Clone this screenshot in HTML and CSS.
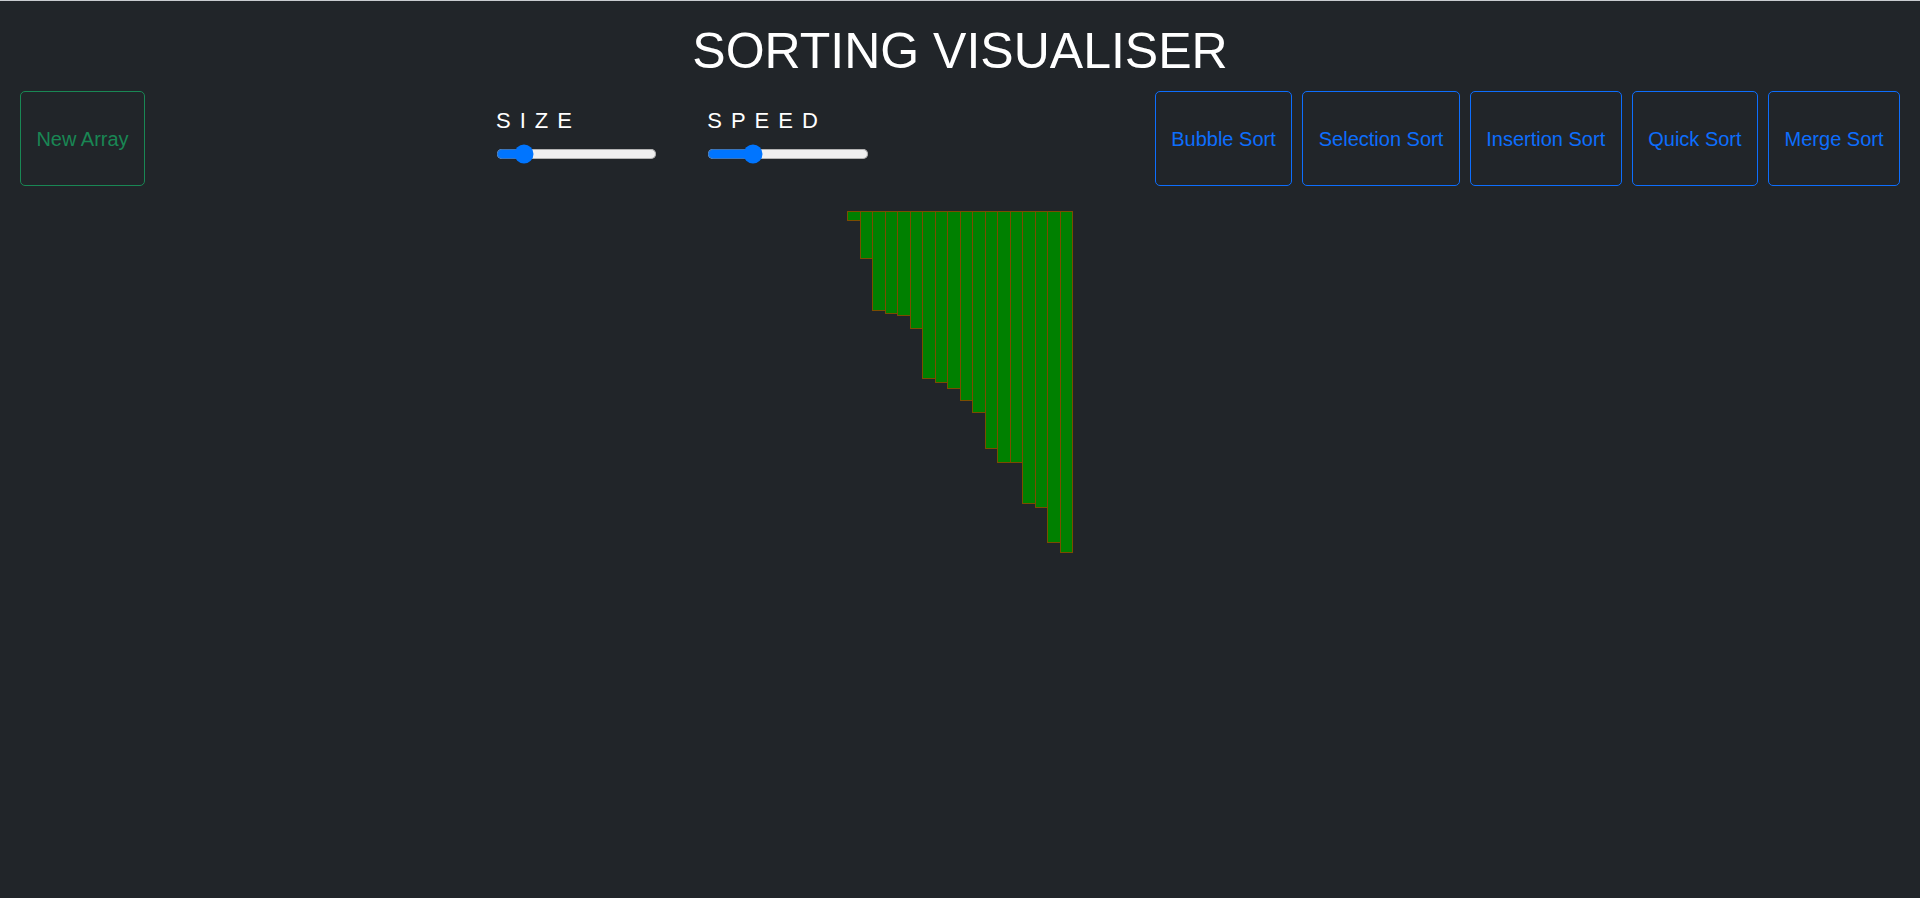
FILE: index.html
```html
<!DOCTYPE html>
<html lang="en">
<head>
<meta charset="utf-8">
<title>Sorting Visualiser</title>
<link rel="stylesheet" href="styles.css">
</head>
<body>
<h1 class="title">SORTING VISUALISER</h1>
<div class="controls">
  <button class="btn btn-green new-array">New Array</button>
  <div class="sliders">
    <div class="slider-group">
      <div class="slider-label">SIZE</div>
      <div class="slider-wrap"><input class="slider" type="range" min="0" max="100" value="13"></div>
    </div>
    <div class="slider-group">
      <div class="slider-label">SPEED</div>
      <div class="slider-wrap"><input class="slider" type="range" min="0" max="100" value="25"></div>
    </div>
  </div>
  <div class="sort-buttons">
    <button class="btn btn-blue">Bubble Sort</button>
    <button class="btn btn-blue">Selection Sort</button>
    <button class="btn btn-blue">Insertion Sort</button>
    <button class="btn btn-blue">Quick Sort</button>
    <button class="btn btn-blue">Merge Sort</button>
  </div>
</div>
<div class="bars">
  <div class="bar" style="height:10px"></div>
  <div class="bar" style="height:48px"></div>
  <div class="bar" style="height:100px"></div>
  <div class="bar" style="height:103px"></div>
  <div class="bar" style="height:105px"></div>
  <div class="bar" style="height:118px"></div>
  <div class="bar" style="height:168px"></div>
  <div class="bar" style="height:172px"></div>
  <div class="bar" style="height:178px"></div>
  <div class="bar" style="height:190px"></div>
  <div class="bar" style="height:202px"></div>
  <div class="bar" style="height:238px"></div>
  <div class="bar" style="height:252px"></div>
  <div class="bar" style="height:252px"></div>
  <div class="bar" style="height:293px"></div>
  <div class="bar" style="height:297px"></div>
  <div class="bar" style="height:332px"></div>
  <div class="bar" style="height:342px"></div>
</div>
</body>
</html>
```

FILE: styles.css
```css
html, body {
  margin: 0;
  padding: 0;
}

body {
  background: #212529;
  min-height: 100vh;
  box-sizing: border-box;
  border-top: 1px solid #c9ccd0;
  font-family: "Liberation Sans", Arial, sans-serif;
  color: #fff;
}

.title {
  margin: 0;
  padding-top: 20px;
  font-size: 50px;
  line-height: 60px;
  font-weight: 400;
  text-align: center;
  color: #fff;
}

.controls {
  display: flex;
  align-items: flex-start;
  padding: 0 20px;
  margin-top: 10px;
}

.btn {
  box-sizing: border-box;
  height: 95px;
  padding: 0 15.5px;
  margin: 0;
  background: transparent;
  border: 1px solid;
  border-radius: 5px;
  font-family: "Liberation Sans", Arial, sans-serif;
  font-size: 20px;
  line-height: 1;
  cursor: pointer;
}

.btn-green {
  color: #198754;
  border-color: #198754;
}

.btn-blue {
  color: #0d6efd;
  border-color: #0d6efd;
}

.new-array {
  width: 125px;
  padding: 0;
}

.sliders {
  display: flex;
  gap: 50px;
  margin-left: 351px;
}

.slider-group {
  display: flex;
  flex-direction: column;
  padding-top: 17px;
}

.slider-label {
  font-size: 22px;
  line-height: 26px;
  letter-spacing: 9px;
  color: #fff;
}

.slider-wrap {
  margin-top: 10px;
  height: 20px;
}

.slider {
  zoom: 1.25;
  display: block;
  margin: 0;
  width: 129px;
}

.sort-buttons {
  margin-left: auto;
  display: flex;
  gap: 10px;
}

.bars {
  display: flex;
  justify-content: center;
  align-items: flex-start;
  margin-top: 25px;
}

.bar {
  box-sizing: border-box;
  width: 13.5px;
  background: #008000;
  border: 1px solid #7a4d00;
}

.bar + .bar {
  margin-left: -1px;
}
```
